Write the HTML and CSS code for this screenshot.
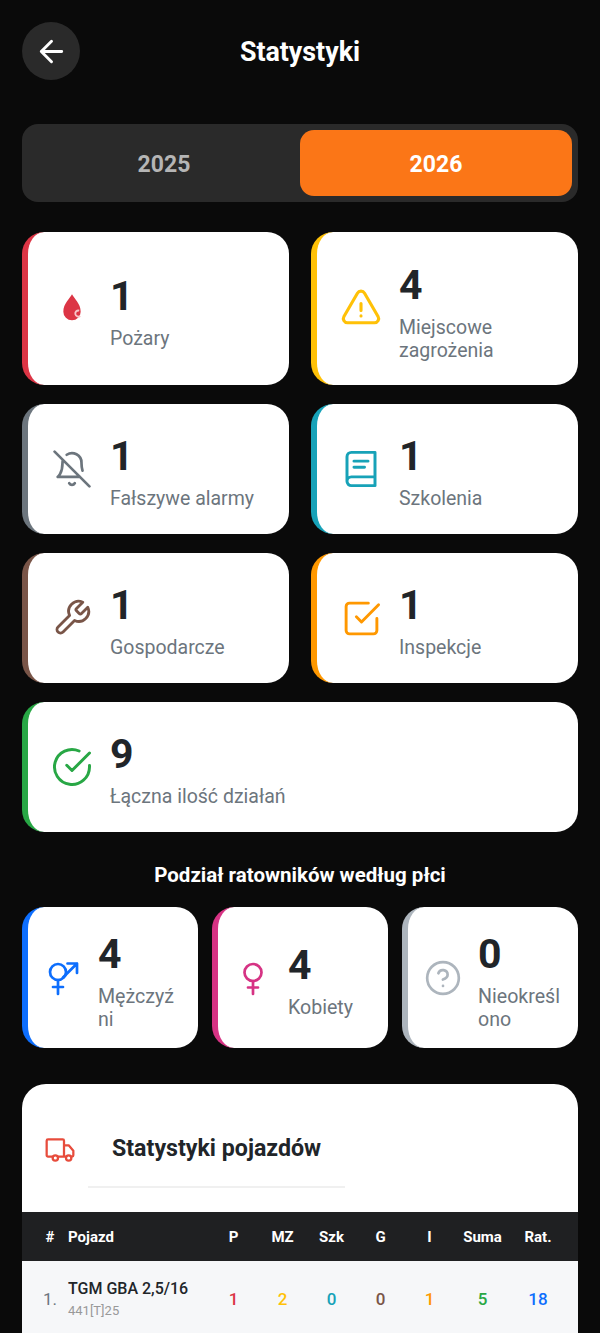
FILE: index.html
```html
<!DOCTYPE html>
<html lang="pl">
<head>
    <meta charset="UTF-8">
    <meta name="viewport" content="width=device-width, initial-scale=1.0">
    <title>Statystyki</title>
    <link rel="stylesheet" href="styles.css">
</head>
<body>
    <div class="page">
        <!-- Header -->
        <header class="header">
            <button class="back-btn">
                <svg width="35" height="35" viewBox="0 0 24 24" class="line arrow"><path d="M19 12H5M12 19l-7-7 7-7"/></svg>
            </button>
            <h1 class="title">Statystyki</h1>
        </header>

        <!-- Year switch -->
        <div class="years">
            <button class="year">2025</button>
            <button class="year active">2026</button>
        </div>

        <!-- Action types -->
        <div class="stats">
            <div class="card c-red">
                <div class="icon">
                    <svg width="32" height="32" viewBox="0 0 24 24"><path class="drop" d="M12 1C10.500 4 5.500 8 5.500 14a6.500 6.500 0 0 0 13 0C18.500 8 13.500 4 12 1z"/><path class="drop-in" d="M18.200 17.200a2.300 2.300 0 1 1-.8-4"/></svg>
                </div>
                <div class="text">
                    <div class="num">1</div>
                    <div class="label">Pożary</div>
                </div>
            </div>
            <div class="card c-yellow">
                <div class="icon">
                    <svg width="44" height="44" viewBox="0 0 24 24" class="line"><path d="M12 9v3.750m-9.303 3.376c-.866 1.500.217 3.374 1.948 3.374h14.710c1.730 0 2.813-1.874 1.948-3.374L13.949 3.378c-.866-1.500-3.032-1.500-3.898 0L2.697 16.126zM12 15.750h.007v.008H12v-.008z"/></svg>
                </div>
                <div class="text">
                    <div class="num">4</div>
                    <div class="label">Miejscowe zagrożenia</div>
                </div>
            </div>
            <div class="card c-gray">
                <div class="icon">
                    <svg width="38" height="38" viewBox="0 0 24 24" class="line"><path d="M13.730 21a2 2 0 0 1-3.460 0M18.630 13A17.890 17.890 0 0 1 18 8M6.260 6.260A5.860 5.860 0 0 0 6 8c0 7-3 9-3 9h14M18 8a6 6 0 0 0-9.330-5M1 1l22 22"/></svg>
                </div>
                <div class="text">
                    <div class="num">1</div>
                    <div class="label">Fałszywe alarmy</div>
                </div>
            </div>
            <div class="card c-teal">
                <div class="icon">
                    <svg width="42" height="42" viewBox="0 0 24 24" class="line"><path d="M6.500 2.500H20v19H6.500A2.500 2.500 0 0 1 4 19V5a2.500 2.500 0 0 1 2.500-2.500zM4 19a2.500 2.500 0 0 1 2.500-2.500H20M8 7.500h8M8 11h6"/></svg>
                </div>
                <div class="text">
                    <div class="num">1</div>
                    <div class="label">Szkolenia</div>
                </div>
            </div>
            <div class="card c-brown">
                <div class="icon">
                    <svg width="40" height="40" viewBox="0 0 24 24" class="line"><path d="M14.700 6.300a1 1 0 0 0 0 1.400l1.600 1.600a1 1 0 0 0 1.400 0l3.770-3.770a6 6 0 0 1-7.940 7.940l-6.910 6.910a2.120 2.120 0 0 1-3-3l6.910-6.910a6 6 0 0 1 7.940-7.940l-3.760 3.760z"/></svg>
                </div>
                <div class="text">
                    <div class="num">1</div>
                    <div class="label">Gospodarcze</div>
                </div>
            </div>
            <div class="card c-orange">
                <div class="icon">
                    <svg width="41" height="41" viewBox="0 0 24 24" class="line"><path d="M9 11l3 3L22 4M21 12v7a2 2 0 0 1-2 2H5a2 2 0 0 1-2-2V5a2 2 0 0 1 2-2h11"/></svg>
                </div>
                <div class="text">
                    <div class="num">1</div>
                    <div class="label">Inspekcje</div>
                </div>
            </div>
            <div class="card c-green wide">
                <div class="icon">
                    <svg width="42" height="42" viewBox="0 0 24 24" class="line"><path d="M22 11.080V12a10 10 0 1 1-5.930-9.140M22 4L12 14.010l-3-3"/></svg>
                </div>
                <div class="text">
                    <div class="num">9</div>
                    <div class="label">Łączna ilość działań</div>
                </div>
            </div>
        </div>

        <!-- Rescuers by gender -->
        <h2 class="section-title">Podział ratowników według płci</h2>
        <div class="genders">
            <div class="card small c-blue">
                <div class="icon">
                    <svg width="42" height="42" viewBox="0 0 42 42" class="line thick"><circle cx="16" cy="15" r="8"/><path d="M16 23v14M11 30h10M21 20.500L35 6.500M25.500 6.500H35V16"/></svg>
                </div>
                <div class="text">
                    <div class="num">4</div>
                    <div class="label">Mężczyźni</div>
                </div>
            </div>
            <div class="card small c-pink">
                <div class="icon">
                    <svg width="42" height="42" viewBox="0 0 42 42" class="line thick"><circle cx="21" cy="15.500" r="8.500"/><path d="M21 24v13M16 30.500h10"/></svg>
                </div>
                <div class="text">
                    <div class="num">4</div>
                    <div class="label">Kobiety</div>
                </div>
            </div>
            <div class="card small c-light">
                <div class="icon">
                    <svg width="38" height="38" viewBox="0 0 24 24" class="line"><circle cx="12" cy="12" r="10"/><path d="M9.090 9a3 3 0 0 1 5.830 1c0 2-3 3-3 3M12 17h.01"/></svg>
                </div>
                <div class="text">
                    <div class="num">0</div>
                    <div class="label">Nieokreślono</div>
                </div>
            </div>
        </div>

        <!-- Vehicles -->
        <div class="vehicles">
            <div class="vehicles-head">
                <svg width="32" height="32" viewBox="0 0 24 24" class="line truck"><path d="M6.500 17H3a1 1 0 0 1-1-1V5a1 1 0 0 1 1-1h11a1 1 0 0 1 1 1v12h-4.500M15 8.500h3.500L22 12.500V16a1 1 0 0 1-1 1h-.500M15 17h1.500"/><circle cx="8.500" cy="18" r="2"/><circle cx="18.500" cy="18" r="2"/></svg>
                <h3 class="vehicles-title">Statystyki pojazdów</h3>
            </div>
            <div class="row row-head">
                <div>#</div>
                <div class="name">Pojazd</div>
                <div>P</div>
                <div>MZ</div>
                <div>Szk</div>
                <div>G</div>
                <div>I</div>
                <div>Suma</div>
                <div>Rat.</div>
            </div>
            <div class="row row-body">
                <div class="lp">1.</div>
                <div class="name">
                    <div class="veh">TGM GBA 2,5/16</div>
                    <div class="veh-sub">441[T]25</div>
                </div>
                <div class="t-red">1</div>
                <div class="t-yellow">2</div>
                <div class="t-teal">0</div>
                <div class="t-brown">0</div>
                <div class="t-orange">1</div>
                <div class="t-green">5</div>
                <div class="t-blue">18</div>
            </div>
        </div>
    </div>
</body>
</html>
```

FILE: styles.css
```css
* {
    box-sizing: border-box;
}

html, body {
    margin: 0;
    height: 1333px;
    overflow: hidden;
}

body {
    background-color: #0a0a0a;
    font-family: Roboto, "Liberation Sans", sans-serif;
    color: #212529;
}

.page {
    padding: 22px 22px 0;
}

/* Header */
.header {
    display: grid;
    grid-template-columns: 58px 1fr 58px;
    align-items: center;
    margin-bottom: 44px;
}

.back-btn {
    width: 58px;
    height: 58px;
    padding: 0;
    border: none;
    border-radius: 50%;
    background-color: #2a2a2a;
    display: flex;
    align-items: center;
    justify-content: center;
    color: #fff;
}

.title {
    margin: 0;
    padding-top: 1px;
    text-align: center;
    font-size: 26.800px;
    font-weight: 700;
    color: #fff;
}

/* Year switch */
.years {
    display: grid;
    grid-template-columns: 1fr 1fr;
    height: 78px;
    padding: 6px;
    border-radius: 16px;
    background-color: #2a2a2a;
    margin-bottom: 30px;
}

.year {
    padding: 2px 0 0;
    border: none;
    border-radius: 14px;
    background: none;
    font-family: inherit;
    font-size: 23px;
    font-weight: 700;
    color: #b5b5b5;
}

.year.active {
    background-color: #fb7617;
    color: #fff;
}

/* Cards */
.stats {
    display: grid;
    grid-template-columns: 1fr 1fr;
    column-gap: 22px;
    row-gap: 18.900px;
}

.wide {
    grid-column: span 2;
}

.card {
    display: flex;
    align-items: center;
    padding: 24.500px 16px 23.500px 20px;
    border-left: 6px solid;
    border-radius: 22px;
    background-color: #fff;
}

.icon {
    flex: none;
    width: 48px;
    margin-right: 14px;
    display: flex;
    align-items: center;
    justify-content: center;
}

.text {
    min-width: 0;
}

.num {
    font-size: 41px;
    font-weight: 700;
    line-height: 57px;
    margin-bottom: 2px;
}

.label {
    font-size: 19.500px;
    line-height: 23px;
    color: #6c757d;
    overflow-wrap: anywhere;
}

.card.small {
    padding: 18.500px 16px 17.500px 14px;
}

.small .icon {
    width: 42px;
}

.small .label {
    font-size: 19.600px;
}

.line {
    fill: none;
    stroke: currentColor;
    stroke-width: 1.700;
    stroke-linecap: round;
    stroke-linejoin: round;
}

.line.arrow {
    stroke-width: 2;
}

.line.thick {
    stroke-width: 2.700;
}

.drop {
    fill: #dc3545;
}

.drop-in {
    fill: none;
    stroke: #f7c5ca;
    stroke-width: 1.400;
}

.c-red { border-color: #dc3545; }
.c-yellow { border-color: #ffc107; }
.c-gray { border-color: #6c757d; }
.c-teal { border-color: #17a2b8; }
.c-brown { border-color: #795548; }
.c-orange { border-color: #ff9800; }
.c-green { border-color: #28a745; }
.c-blue { border-color: #0d6efd; }
.c-pink { border-color: #d63384; }
.c-light { border-color: #adb5bd; }

.c-yellow .icon { color: #ffc107; }
.c-gray .icon { color: #6c757d; }
.c-teal .icon { color: #17a2b8; }
.c-brown .icon { color: #795548; }
.c-orange .icon { color: #ff9800; }
.c-green .icon { color: #28a745; }
.c-blue .icon { color: #0d6efd; }
.c-pink .icon { color: #d63384; }
.c-light .icon { color: #adb5bd; }

/* Gender section */
.section-title {
    margin: 31.500px 0 20px;
    text-align: center;
    font-size: 20.500px;
    line-height: 24px;
    font-weight: 700;
    color: #fff;
}

.genders {
    display: grid;
    grid-template-columns: repeat(3, 176px);
    justify-content: space-between;
    margin-bottom: 36px;
}

/* Vehicles table */
.vehicles {
    border-radius: 24px 24px 0 0;
    background-color: #fff;
    overflow: hidden;
}

.vehicles-head {
    display: flex;
    align-items: flex-start;
    padding: 50px 0 24px 22px;
}

.truck {
    flex: none;
    margin-right: 12px;
    color: #e74c3c;
}

.vehicles-title {
    margin: 0;
    padding: 0 24px 24px;
    border-bottom: 2px solid #f0f0f0;
    font-size: 23.200px;
    line-height: 28px;
    font-weight: 700;
}

.row {
    display: grid;
    grid-template-columns: 46px 141px repeat(5, 49px) 57px 54px;
    align-items: center;
    text-align: center;
}

.row > div:first-child {
    padding-left: 14px;
    padding-right: 4px;
}

.row .name {
    text-align: left;
}

.row-head {
    height: 49px;
    background-color: #1f2022;
    color: #fff;
    font-size: 15px;
    font-weight: 700;
}

.row-body {
    height: 76px;
    background-color: #f6f7f9;
    font-size: 17px;
    font-weight: 500;
}

.lp {
    font-weight: 400;
    color: #6c757d;
}

.veh {
    font-size: 16px;
    line-height: 20px;
    font-weight: 500;
    color: #212529;
}

.veh-sub {
    margin-top: 4px;
    font-size: 13px;
    line-height: 16px;
    font-weight: 400;
    color: #999;
}

.t-red { color: #dc3545; }
.t-yellow { color: #ffc107; }
.t-teal { color: #17a2b8; }
.t-brown { color: #795548; }
.t-orange { color: #ff9800; }
.t-green { color: #28a745; }
.t-blue { color: #0d6efd; }
```
